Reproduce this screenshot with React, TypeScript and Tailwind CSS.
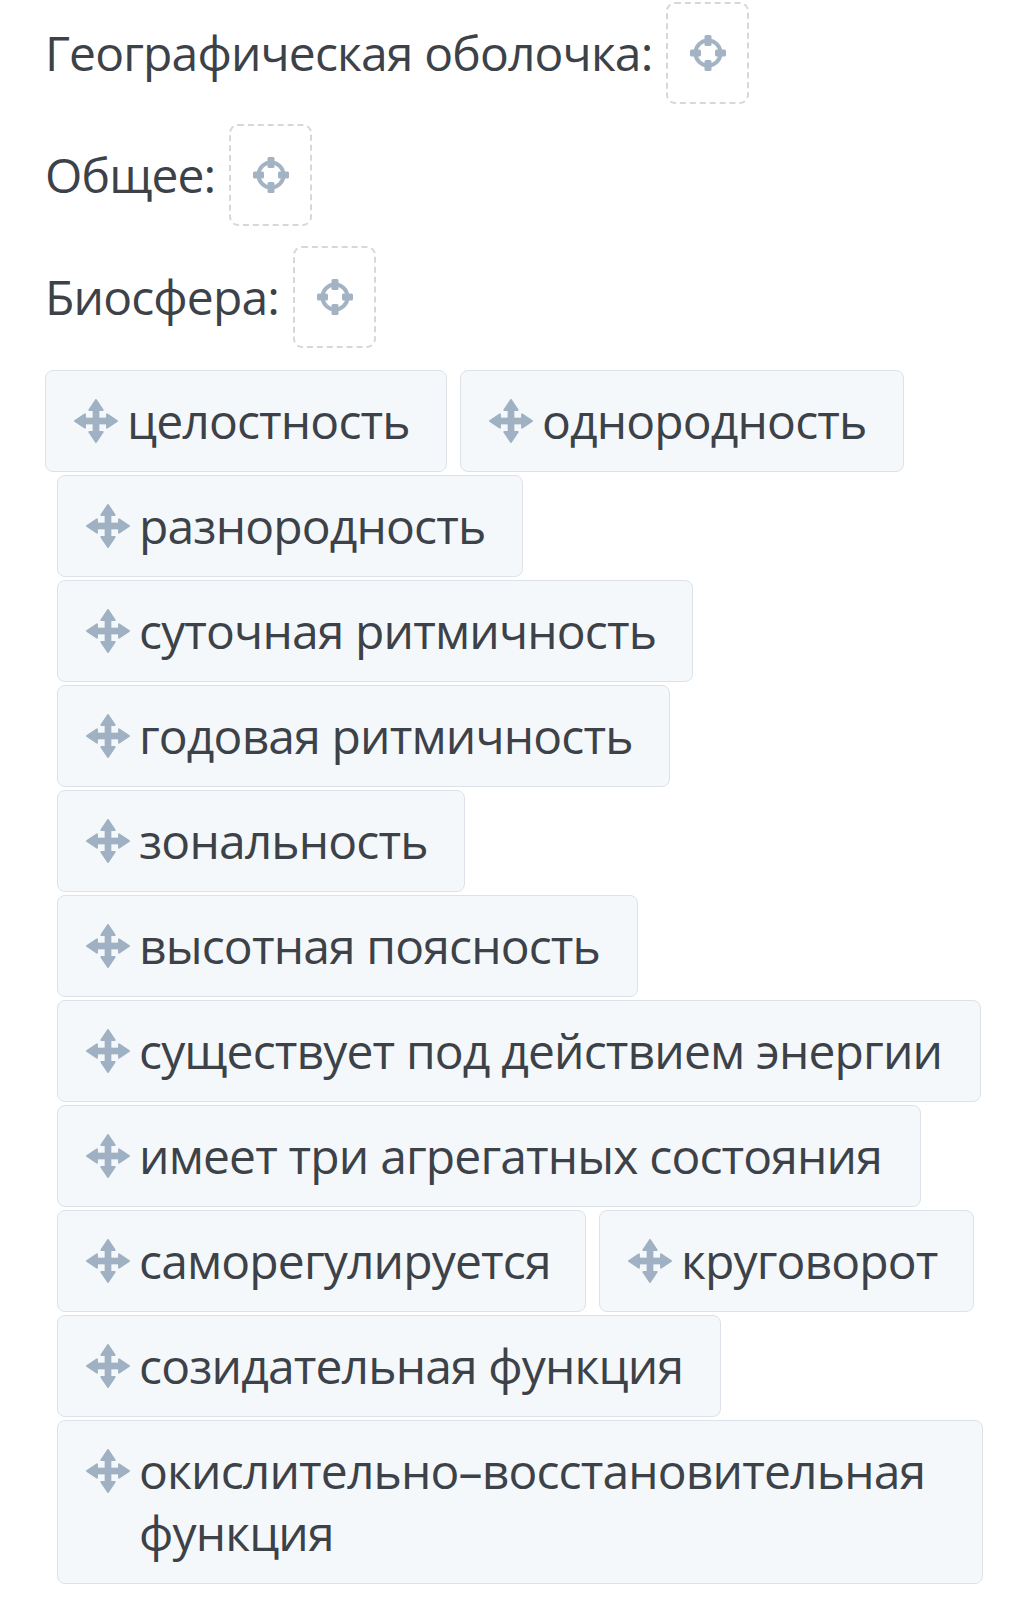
import React from "react";

const MoveIcon = () => (
  <svg width="46" height="46" viewBox="0 0 48 48" className="shrink-0">
    <g fill="#9fb1c2" stroke="#9fb1c2" strokeLinejoin="round" strokeWidth="2">
      <rect x="20.5" y="10" width="7" height="28" stroke="none" />
      <rect x="10" y="20.5" width="28" height="7" stroke="none" />
      <polygon points="24,2 17,12.5 31,12.5" />
      <polygon points="24,46 17,35.5 31,35.5" />
      <polygon points="2,24 12.5,17 12.5,31" />
      <polygon points="46,24 35.5,17 35.5,31" />
    </g>
  </svg>
);

const TargetIcon = () => (
  <svg width="40" height="40" viewBox="0 0 40 40">
    <g fill="#a3b3c3">
      <circle cx="20" cy="20" r="12.5" fill="none" stroke="#a3b3c3" strokeWidth="4" />
      <rect x="16.5" y="2" width="7" height="11" rx="1.5" />
      <rect x="16.5" y="27" width="7" height="11" rx="1.5" />
      <rect x="2" y="16.5" width="11" height="7" rx="1.5" />
      <rect x="27" y="16.5" width="11" height="7" rx="1.5" />
    </g>
  </svg>
);

const Drop = () => (
  <div className="w-[83px] h-[102px] border-2 border-dashed border-[#d4d8dc] rounded-[9px] flex items-center justify-center">
    <TargetIcon />
  </div>
);

const Chip = ({ text, w }: { text: string; w: string }) => (
  <div
    className={`flex items-start border border-[#dce2e7] bg-[#f5f8fb] rounded-[8px] pl-[27px] pr-[10px] py-[19px] leading-[62px] ${w}`}
  >
    <div className="h-[62px] flex items-center mr-[8px] shrink-0">
      <MoveIcon />
    </div>
    <span className="text-[#3c4248]">{text}</span>
  </div>
);

export default function App() {
  return (
    <div
      className="w-[1027px] min-h-[1600px] bg-white pt-[2px] pl-[45px] text-[48px] tracking-[-0.85px] text-[#3c4248]"
      style={{ fontFamily: '"Open Sans", "Noto Sans", sans-serif' }}
    >
      <div className="flex flex-col gap-[20px]">
        <div className="flex items-center gap-[14px] h-[102px]">
          <span>Географическая оболочка:</span>
          <Drop />
        </div>
        <div className="flex items-center gap-[14px] h-[102px]">
          <span>Общее:</span>
          <Drop />
        </div>
        <div className="flex items-center gap-[14px] h-[102px]">
          <span>Биосфера:</span>
          <Drop />
        </div>
      </div>
      <div className="mt-[22px] flex flex-col gap-[3px]">
        <div className="flex gap-[13px]">
          <Chip text="целостность" w="w-[402px]" />
          <Chip text="однородность" w="w-[444px]" />
        </div>
        <div className="pl-[12px] flex flex-col gap-[3px]">
          <div className="flex">
            <Chip text="разнородность" w="w-[466px]" />
          </div>
          <div className="flex">
            <Chip text="суточная ритмичность" w="w-[636px]" />
          </div>
          <div className="flex">
            <Chip text="годовая ритмичность" w="w-[613px]" />
          </div>
          <div className="flex">
            <Chip text="зональность" w="w-[408px]" />
          </div>
          <div className="flex">
            <Chip text="высотная поясность" w="w-[581px]" />
          </div>
          <div className="flex">
            <Chip text="существует под действием энергии" w="w-[924px]" />
          </div>
          <div className="flex">
            <Chip text="имеет три агрегатных состояния" w="w-[864px]" />
          </div>
          <div className="flex gap-[13px]">
            <Chip text="саморегулируется" w="w-[529px]" />
            <Chip text="круговорот" w="w-[375px]" />
          </div>
          <div className="flex">
            <Chip text="созидательная функция" w="w-[664px]" />
          </div>
          <div className="flex">
            <Chip text="окислительно–восстановительная функция" w="w-[926px]" />
          </div>
        </div>
      </div>
    </div>
  );
}
